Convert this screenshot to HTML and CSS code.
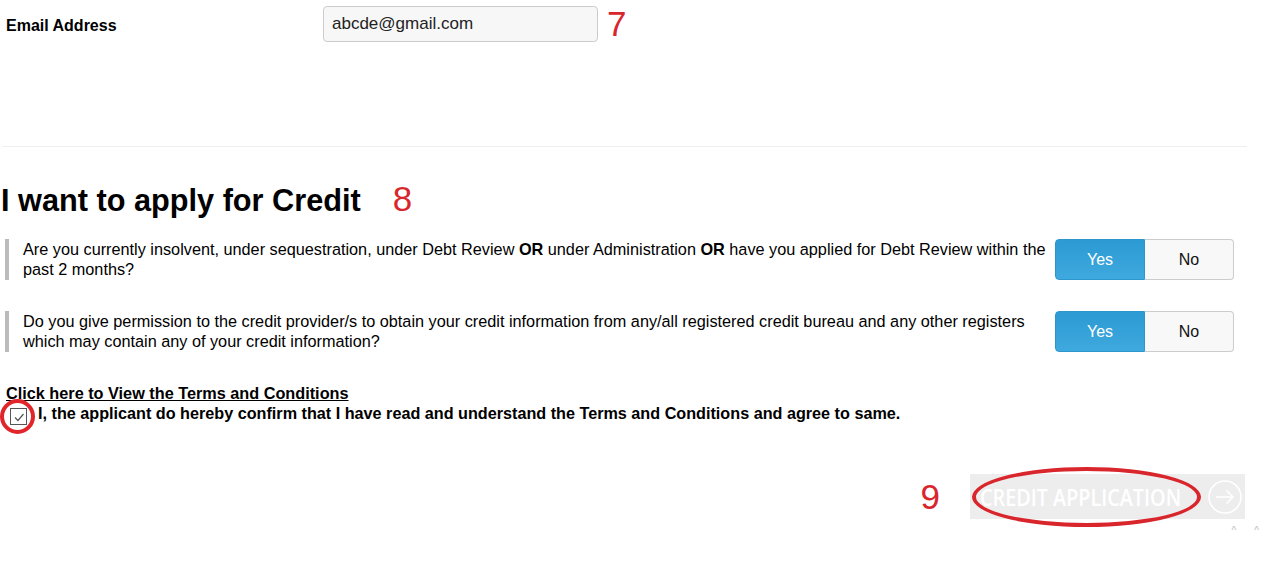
FILE: index.html
```html
<!DOCTYPE html>
<html lang="en">
<head>
    <meta charset="UTF-8">
    <meta name="viewport" content="width=device-width, initial-scale=1.0">
    <title>Credit Application</title>
    <link rel="stylesheet" href="styles.css">
</head>
<body>
    <div class="page">
        <div class="field-row">
            <label class="field-label" for="email">Email Address</label>
            <input type="text" id="email" class="text-input" value="abcde@gmail.com">
            <span class="step">7</span>
        </div>

        <hr class="divider">

        <h2 class="section-title">I want to apply for Credit<span class="step">8</span></h2>

        <div class="question">
            <p class="question-text">Are you currently insolvent, under sequestration, under Debt Review <b>OR</b> under Administration <b>OR</b> have you applied for Debt Review within the past 2 months?</p>
            <div class="toggle">
                <button class="toggle-btn active">Yes</button>
                <button class="toggle-btn">No</button>
            </div>
        </div>

        <div class="question">
            <p class="question-text">Do you give permission to the credit provider/s to obtain your credit information from any/all registered credit bureau and any other registers which may contain any of your credit information?</p>
            <div class="toggle">
                <button class="toggle-btn active">Yes</button>
                <button class="toggle-btn">No</button>
            </div>
        </div>

        <a href="#" class="terms-link">Click here to View the Terms and Conditions</a>
        <label class="confirm">
            <span class="checkbox">
                <svg width="14" height="14" viewBox="0 0 14 14"><path d="M3 7.5 L6 10.5 L11.5 4" fill="none" stroke="#555" stroke-width="1.2"/></svg>
            </span>
            I, the applicant do hereby confirm that I have read and understand the Terms and Conditions and agree to same.
            <span class="mark-circle"></span>
        </label>

        <div class="actions">
            <span class="step">9</span>
            <button class="submit-btn">
                <span class="submit-label">CREDIT APPLICATION</span>
                <svg class="arrow" width="34" height="34" viewBox="0 0 34 34">
                    <circle cx="17" cy="17" r="16" fill="none" stroke="#fff" stroke-width="1.6"/>
                    <path d="M8 17 H25 M18.5 10.5 L25 17 L18.5 23.5" fill="none" stroke="#fff" stroke-width="1.6"/>
                </svg>
                <span class="mark-ellipse"></span>
            </button>
        </div>
        <div class="corner-marks"><span>^</span><span>^</span></div>
    </div>
</body>
</html>
```

FILE: styles.css
```css
body {
    margin: 0;
    font-family: "Liberation Sans", Arial, sans-serif;
    color: #000;
    background-color: #fff;
}

.page {
    width: 1247px;
}

.field-row {
    display: flex;
    align-items: center;
    padding-top: 6px;
}

.field-label {
    box-sizing: border-box;
    width: 323px;
    padding: 4px 0 0 6px;
    font-size: 16px;
    font-weight: bold;
}

.text-input {
    box-sizing: border-box;
    width: 275px;
    height: 36px;
    padding: 0 8px;
    border: 1px solid #ccc;
    border-radius: 4px;
    background-color: #f7f7f7;
    font-family: "Liberation Sans", Arial, sans-serif;
    font-size: 17px;
    color: #222;
}

.step {
    margin-left: 9px;
    font-family: "Liberation Sans", Arial, sans-serif;
    font-size: 35px;
    font-weight: normal;
    line-height: 36px;
    color: #d9262c;
}

.divider {
    margin: 104px 0 0 3px;
    border: 0;
    border-top: 1px solid #eee;
}

.section-title {
    margin: 34px 0 20px 1px;
    font-size: 30.7px;
    line-height: 36px;
}

.section-title .step {
    margin-left: 32px;
}

.question {
    display: flex;
    align-items: center;
    padding: 0 13px 0 5px;
    margin-bottom: 31px;
}

.question-text {
    flex: 1;
    margin: 0;
    padding-left: 14px;
    border-left: 4px solid #bbb;
    font-size: 16.25px;
    line-height: 20px;
    min-height: 41px;
    box-sizing: border-box;
}

.toggle {
    display: flex;
    width: 179px;
    height: 41px;
    margin-left: 8px;
}

.toggle-btn {
    flex: 1;
    border: 1px solid #ccc;
    background-color: #f8f8f8;
    font-family: "Liberation Sans", Arial, sans-serif;
    font-size: 16px;
    color: #111;
}

.toggle-btn:first-child {
    border-radius: 4px 0 0 4px;
}

.toggle-btn:last-child {
    border-left: 0;
    border-radius: 0 4px 4px 0;
}

.toggle-btn.active {
    background: linear-gradient(#2c9ad3, #3ea9de);
    border-color: #2c96cd;
    color: #fff;
}

.terms-link {
    display: block;
    padding-left: 6px;
    font-size: 16.25px;
    font-weight: bold;
    line-height: 20px;
    color: #000;
}

.confirm {
    position: relative;
    display: flex;
    align-items: flex-start;
    padding-left: 10px;
    font-size: 16.2px;
    font-weight: bold;
    line-height: 20px;
}

.checkbox {
    box-sizing: border-box;
    display: flex;
    align-items: center;
    justify-content: center;
    width: 17px;
    height: 17px;
    margin: 5px 11px 0 0;
    border: 1px solid #555;
    background-color: #fff;
}

.mark-circle {
    position: absolute;
    left: 0;
    top: -4px;
    box-sizing: border-box;
    width: 35px;
    height: 35px;
    border: 4px solid #e0252b;
    border-radius: 50%;
}

.actions {
    display: flex;
    justify-content: flex-end;
    align-items: center;
    margin-top: 49px;
    padding-right: 2px;
}

.actions .step {
    margin: 0 30px 0 0;
}

.submit-btn {
    position: relative;
    box-sizing: border-box;
    display: flex;
    align-items: center;
    justify-content: space-between;
    width: 275px;
    height: 45px;
    padding: 0 3px 0 10px;
    border: none;
    background-color: #ededed;
    color: #fff;
}

.submit-label {
    display: inline-block;
    width: 203px;
    white-space: nowrap;
    font-family: "Open Sans", sans-serif;
    font-size: 23px;
    font-weight: 600;
    transform: scaleX(0.86);
    transform-origin: left center;
}

.mark-ellipse {
    position: absolute;
    left: 2px;
    top: -7px;
    box-sizing: border-box;
    width: 229px;
    height: 60px;
    border: 4px solid #d9262c;
    border-radius: 50%;
}

.corner-marks {
    display: flex;
    justify-content: flex-end;
    gap: 18px;
    margin-top: 6px;
    margin-right: -12px;
    font-size: 10px;
    color: #bbb;
}
```
